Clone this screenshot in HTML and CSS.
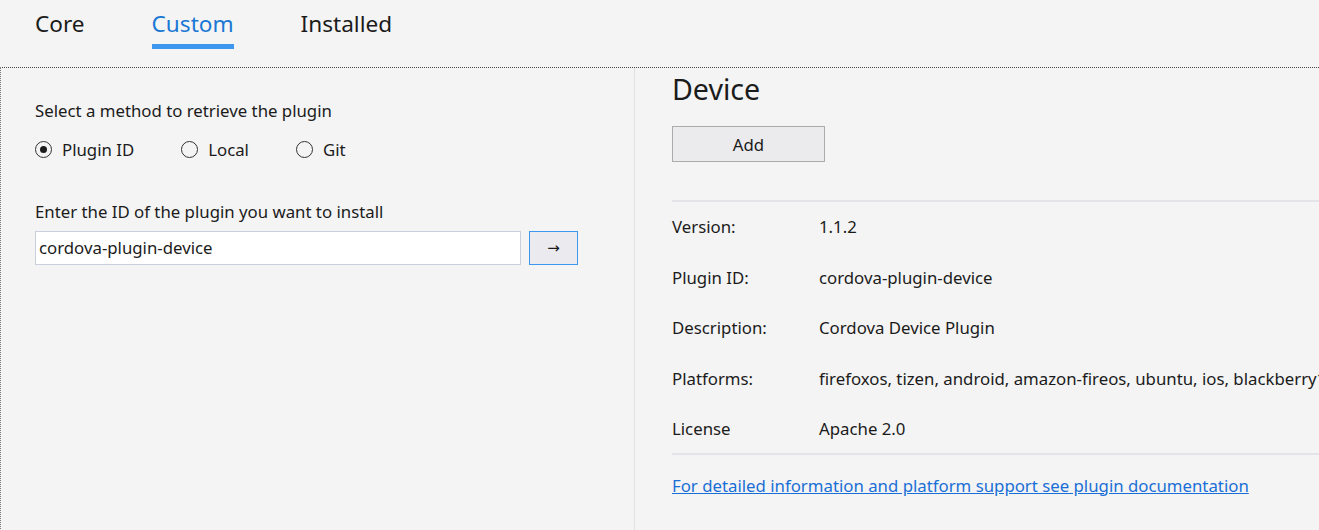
FILE: index.html
```html
<!DOCTYPE html>
<html>
<head>
<meta charset="utf-8">
<link rel="stylesheet" href="styles.css">
</head>
<body>
<nav class="tabs">
  <div class="tab">Core</div>
  <div class="tab active">Custom</div>
  <div class="tab">Installed</div>
</nav>
<main class="content">
  <section class="left">
    <div class="label">Select a method to retrieve the plugin</div>
    <div class="radios">
      <label class="radio"><span class="dot checked"></span>Plugin ID</label>
      <label class="radio"><span class="dot"></span>Local</label>
      <label class="radio"><span class="dot"></span>Git</label>
    </div>
    <div class="label label2">Enter the ID of the plugin you want to install</div>
    <div class="inputrow">
      <div class="input">cordova-plugin-device</div>
      <button class="go">→</button>
    </div>
  </section>
  <section class="right">
    <h1 class="title">Device</h1>
    <button class="add">Add</button>
    <div class="sep"></div>
    <dl class="info">
      <div class="row"><dt>Version:</dt><dd>1.1.2</dd></div>
      <div class="row"><dt>Plugin ID:</dt><dd>cordova-plugin-device</dd></div>
      <div class="row"><dt>Description:</dt><dd>Cordova Device Plugin</dd></div>
      <div class="row"><dt>Platforms:</dt><dd>firefoxos, tizen, android, amazon-fireos, ubuntu, ios, blackberry10, wp7, wp8, windows8, windows, browser</dd></div>
      <div class="row"><dt>License</dt><dd>Apache 2.0</dd></div>
    </dl>
    <div class="sep sep2"></div>
    <a class="doc" href="#">For detailed information and platform support see plugin documentation</a>
  </section>
</main>
</body>
</html>
```
FILE: styles.css
```css
html, body {
  margin: 0;
  padding: 0;
  background: #f4f4f4;
  height: 100%;
  overflow: hidden;
}
body {
  font-family: "Noto Sans", "Open Sans", sans-serif;
  color: #1b1b1b;
  font-size: 16.8px;
}
.tabs {
  display: flex;
  height: 67px;
  padding-left: 35px;
  box-sizing: border-box;
}
.tab {
  font-size: 22.6px;
  line-height: 30px;
  padding-top: 9px;
  margin-right: 67px;
  height: 41px;
}
.tab.active {
  color: #1a78d4;
  position: relative;
}
.tab.active::after {
  content: "";
  position: absolute;
  left: 0;
  right: 0;
  top: 44px;
  height: 5px;
  background: #3d97ee;
}
.content {
  display: grid;
  grid-template-columns: 634px 1fr;
  border-top: 1px dotted #444;
  border-left: 1px dotted #777;
  height: 463px;
  width: 1400px;
}
.left {
  border-right: 1px solid #e2e2e2;
  padding-left: 34px;
  padding-top: 32px;
}
.label {
  line-height: 22px;
}
.radios {
  display: flex;
  margin-top: 15px;
  height: 24px;
  align-items: center;
}
.radio {
  display: flex;
  align-items: center;
  margin-right: 47px;
}
.dot {
  width: 15px;
  height: 15px;
  border: 1px solid #333;
  border-radius: 50%;
  margin-right: 10px;
  box-sizing: content-box;
  position: relative;
}
.dot.checked::after {
  content: "";
  position: absolute;
  left: 4px;
  top: 4px;
  width: 7px;
  height: 7px;
  border-radius: 50%;
  background: #1b1b1b;
}
.label2 {
  margin-top: 40px;
}
.inputrow {
  display: flex;
  margin-top: 8px;
  gap: 8px;
}
.input {
  width: 481px;
  height: 32px;
  border: 1px solid #c9cfdc;
  background: #fff;
  padding-left: 3px;
  line-height: 32px;
  box-sizing: content-box;
}
.go {
  width: 49px;
  height: 34px;
  border: 1px solid #3d97ee;
  background: #ebebef;
  font-family: "DejaVu Sans", sans-serif;
  font-size: 15px;
  color: #1b1b1b;
  padding: 0;
}
.right {
  padding-left: 37px;
}
.title {
  margin: 2px 0 0;
  font-weight: normal;
  font-size: 28.6px;
  line-height: 38px;
}
.add {
  margin-top: 18px;
  width: 153px;
  height: 36px;
  background: #ebebee;
  border: 1px solid #ababab;
  font-family: inherit;
  font-size: 16.8px;
  color: #1b1b1b;
  padding: 0;
}
.sep {
  height: 2px;
  background: #e4e4e8;
  margin-top: 38px;
}
.info {
  margin: 13px 0 0;
}
.row {
  display: flex;
  height: 50.5px;
  align-items: flex-start;
  line-height: 24px;
}
.row dt {
  width: 147px;
  flex: none;
}
.row dd {
  margin: 0;
  white-space: nowrap;
}
.sep2 {
  margin-top: -15px;
}
.doc {
  display: inline-block;
  margin-top: 19px;
  color: #1a6fd6;
  line-height: 24px;
}
```
